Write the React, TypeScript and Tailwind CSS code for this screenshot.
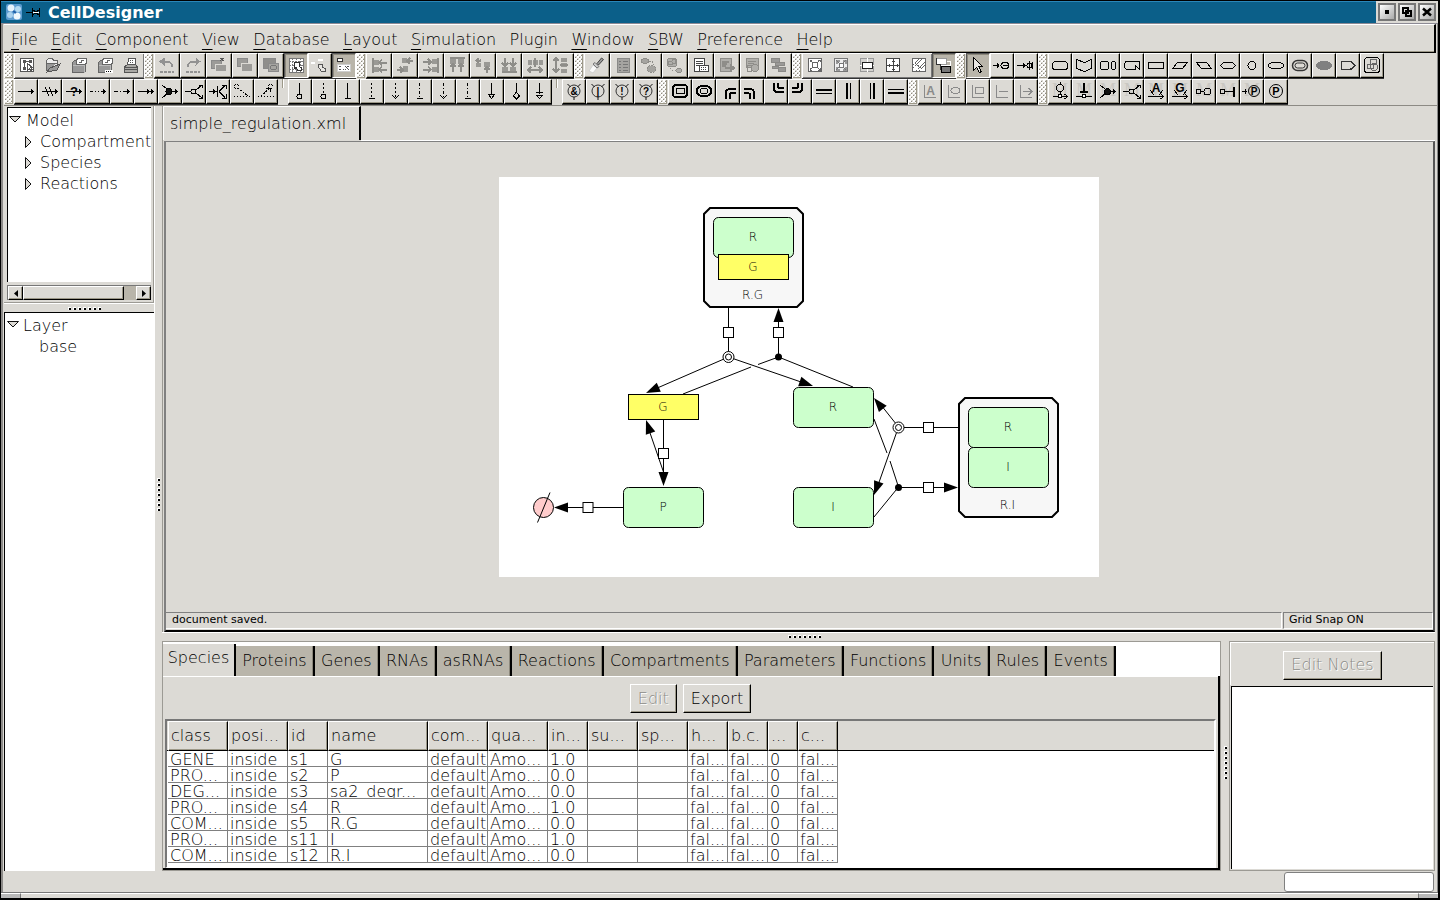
import type { ReactNode } from "react";

const base = "M4 12.5H20M17.5 10v5M18.5 11v3";

function T({ x, y, size = 11, children }: { x: number; y: number; size?: number; children: ReactNode }) {
  return (
    <text x={x} y={y} fontSize={size} fontWeight={700} textAnchor="middle" fill="currentColor" stroke="none" fontFamily="Liberation Sans, sans-serif">
      {children}
    </text>
  );
}

const Watermark = () => (
  <text x={12} y={17} fontSize={18} textAnchor="middle" fill="#c9c7c2" stroke="none" fontFamily="Liberation Serif, serif">
    M
  </text>
);

const Gate = ({ sign }: { sign: string }) => (
  <g shapeRendering="auto" stroke="#333">
    <circle cx="12" cy="12" r="6" />
    <path d="M5.5 5l3 3M18.500 5l-3 3M12 18v3" stroke="#111" />
    <T x={12} y={16} size={10}>{sign}</T>
  </g>
);

const Folder = ({ dots }: { dots?: boolean }) => (
  <g stroke="#666">
    <path d="M5.500 9.500l2-2h3v4h8v7l-2 1h-11z" fill="#999" />
    <path d="M9.500 6.500l2-1h8v5l-2 1h-8z" fill="#fff" />
    <path d="M12 9.500h2v-2h3" />
    <path d="M6 12.500h11v7" stroke="#bbb" />
    {dots && (
      <g>
        <path d="M12 18h8" stroke="#fff" strokeWidth="3" />
        <path d="M13 18.500h6" stroke="#000" strokeDasharray="1 1" />
      </g>
    )}
  </g>
);

const Bars = ({ d, r }: { d: string; r: number[][] }) => (
  <g stroke="#8e8d89">
    {r.map(([x, y, w, h], i) => (
      <rect key={i} x={x} y={y} width={w} height={h} fill="#9a9995" stroke="none" />
    ))}
    <path d={d} strokeWidth="2" />
  </g>
);

const icons: Record<string, ReactNode> = {
  New: <g stroke="#555"><rect x="5.5" y="5.5" width="13" height="13" fill="#fff" /><rect x="8" y="7" width="3" height="3" fill="#555" stroke="none" /><rect x="14" y="7" width="3" height="3" fill="#555" stroke="none" /><rect x="8" y="14" width="3" height="3" fill="#555" stroke="none" /><path d="M11 8.500h3M9.500 10v4" /><path d="M12.500 10.500v7l2-2 1 2 2-1-2-2h2z" fill="#fff" /></g>,
  Open: <g stroke="#666"><path d="M5.500 17V7.500l2-2h4l1 2h4v5" fill="#eee" /><path d="M5.500 17.500V10.500h10" fill="#999" /><path d="M6 19l3-4 10-4-3 6z" fill="#999" stroke="#555" /></g>,
  Close: <Folder />,
  "Close All": <Folder dots />,
  Print: <g stroke="#555"><path d="M8.500 12l1-6.500h7v6.500" fill="#fff" /><path d="M11 7.500h4M11 9.500h4" strokeDasharray="1 1" /><path d="M5.500 14l3-2.500h8l2 2.500v5h-13z" fill="#aaa9a5" /><path d="M5 14.500h14M5 16.500h14" /></g>,
  Undo: <g stroke="#929292"><path d="M8 8.5h6l3 3v2" strokeWidth="2" /><path d="M5 8.5l4-3v6z" fill="#929292" /><path d="M5 18.5h14" strokeWidth="2" strokeDasharray="3 1" /></g>,
  Redo: <g stroke="#929292"><path d="M16 8.5h-6l-3 3v2" strokeWidth="2" /><path d="M19 8.5l-4-3v6z" fill="#929292" /><path d="M5 18.5h14" strokeWidth="2" strokeDasharray="3 1" /></g>,
  Cut: <g stroke="#8a8a8a" fill="#9c9b98"><rect x="4.5" y="7.5" width="10" height="8" rx="1" /><rect x="8.500" y="11.500" width="11" height="7" rx="1" stroke="#dcdad5" /><path d="M13 5l4 3M17 5l-4 3" stroke="#555" /></g>,
  Copy: <g stroke="#8a8a8a" fill="#9c9b98"><rect x="4.5" y="5.5" width="10" height="8" rx="1" /><rect x="8.5" y="10.5" width="11" height="8" rx="1" stroke="#dcdad5" /></g>,
  Paste: <g stroke="#8a8a8a"><rect x="4.5" y="5.5" width="12" height="10" rx="1" fill="#8f8e8b" /><rect x="9.5" y="10.500" width="10" height="8" rx="1" fill="#a5a4a0" /><rect x="11.5" y="12.5" width="6" height="4" rx="2" stroke="#777" /></g>,
  Grid: <g stroke="#777"><path d="M5 5h14v14H5z" fill="#fff" /><path d="M5 8.500h14M5 12.5h14M5 16.5h14M8.5 5v14M12.5 5v14M16.5 5v14" strokeDasharray="2 1" /><path d="M10 10.500v-1h5v4l2 1v3h-3l-2-3-1 1z" fill="#fff" stroke="#333" /></g>,
  Snap: <g><path d="M3 10h4M10 7h5" stroke="#fff" strokeWidth="2" /><path d="M10.500 11.500h4v3l3 1v3h-4l-2-3-1-1z" fill="#e8e6e2" stroke="#555" /></g>,
  Overview: <g><rect x="5.500" y="5.500" width="5" height="3" fill="#fff" stroke="#333" /><rect x="5.500" y="11.500" width="13" height="7" fill="#fff" stroke="#ccc" /><path d="M7 13.500h2M7 16.500h2M11 16.500h1M13 13l3 3M15 13.500h2M16 16.500h1M13 16.500h1" stroke="#555" /></g>,
  "Align Left": <Bars d="M6 5v15M12 9.500h8M15 6.500l-3 3 3 3M12 16.500h8M15 13.500l-3 3 3 3" r={[[6, 7, 6, 5], [6, 14, 6, 5]]} />,
  "Align Centre": <Bars d="M14 8h6M17 5l-3 3 3 3M4 17h6M7 14l3 3-3 3" r={[[9, 5, 5, 5], [10, 13, 5, 6]]} />,
  "Align Right": <Bars d="M19 5v15M4 8.500h8M9 6l3 3-3 3M4 16.500h8M9 13.500l3 3-3 3" r={[[13, 6, 6, 5], [13, 14, 6, 5]]} />,
  "Align Top": <Bars d="M5 5h15M8 19v-8M5 14l3-3 3 3M16 19v-8M13 14l3-3 3 3" r={[[5, 6, 6, 5], [13, 6, 6, 5]]} />,
  "Align Middle": <Bars d="M7 5v4M5 7l2 2 3-2M16 20v-5M13 17l3-3 3 3" r={[[5, 10, 5, 4], [13, 9, 6, 5]]} />,
  "Align Bottom": <Bars d="M5 19h15M8 5v8M5 10l3 3 3-3M16 5v8M13 10l3 3 3-3" r={[[5, 14, 6, 5], [13, 14, 6, 5]]} />,
  "Space Horizontally": <Bars d="M5 17h14M8 14l-3 3 3 3M16 14l3 3-3 3M12 5v9" r={[[5, 7, 4, 5], [10, 7, 5, 5], [16, 7, 4, 5]]} />,
  "Space Vertically": <Bars d="M7 5v14M4 8l3-3 3 3M4 16l3 3 3-3M11 12h8" r={[[12, 5, 6, 4], [12, 10, 6, 4], [12, 16, 6, 4]]} />,
  Brush: <g shapeRendering="auto"><path d="M4 18l4-6 4 3-4 5z" fill="#fafafa" stroke="#d0d0d0" /><path d="M8 11l4 4 2-1.500-4-4z" fill="#ccc" stroke="#777" /><path d="M12 10.500L16.500 5l2 1.500-5 5.500z" fill="#999" stroke="#444" /></g>,
  List: <g stroke="#777"><rect x="6.500" y="5.500" width="12" height="14" fill="#a5a4a1" stroke="#8a8a88" /><path d="M8 8.500h2M12 8.500h5M8 11.500h2M12 11.500h5M8 14.500h2M12 14.500h5M8 17.500h2M12 17.500h5" /></g>,
  Group: <g stroke="#8e8d89" fill="#a5a4a0"><ellipse cx="8" cy="8" rx="3.500" ry="2.500" /><path d="M12 8.500h3l2 3" fill="none" strokeDasharray="2 1" /><ellipse cx="14.500" cy="16" rx="4.500" ry="3.500" strokeDasharray="2 1" /></g>,
  Ungroup: <g stroke="#8e8d89" fill="#b0afab"><rect x="4.500" y="5.500" width="9" height="8" rx="2" /><circle cx="7.500" cy="10" r="2" /><circle cx="11" cy="8.500" r="2" /><path d="M7 15l3 3" strokeDasharray="2 1" /><ellipse cx="16" cy="17.500" rx="3" ry="2" /></g>,
  Notes: <g stroke="#444"><path d="M5.500 5.500h10v13h-10z" fill="#fff" /><path d="M7 8.500h7M7 10.500h7M7 12.500h3" /><path d="M10.500 12.500h9v6h-9z" fill="#fff" /><path d="M12 14.500h6M12 16.500h6" strokeDasharray="1 1" /></g>,
  "Notes Out": <g stroke="#8e8d89"><path d="M5 5h11v13H5z" fill="#b0afab" /><path d="M7 8.500h7M7 10.500h5M7 12.500h4M10 15h8M15 12l4 3-4 3" strokeWidth="2" /></g>,
  "Notes Pin": <g stroke="#8e8d89"><path d="M5 5h12v9H5z" fill="#b0afab" /><path d="M7 8.500h8M7 10.500h6" /><rect x="6.500" y="12.500" width="4" height="6" /><circle cx="14" cy="15" r="3.500" fill="#b0afab" /></g>,
  Layers: <g stroke="#8a8986" fill="#9a9997"><rect x="4.500" y="5.500" width="8" height="4" /><rect x="8.500" y="9.500" width="9" height="3" /><rect x="5.500" y="13.500" width="6" height="2" /><rect x="11.500" y="14.500" width="7" height="4" /></g>,
  "Fit Window": <g stroke="#666"><rect x="5.500" y="5.500" width="13" height="13" fill="#fff" /><rect x="9.500" y="9.500" width="5" height="5" /><path d="M7 7l3 3M17 7l-3 3M7 17l3-3M17 17l-3-3M7 9v-2h2M15 7h2v2M7 15v2h2M15 17h2v-2" /></g>,
  "Zoom Corners": <g stroke="#777"><rect x="5.500" y="5.500" width="13" height="13" fill="#eee" /><path d="M8 11V8h3M14 8h3v3M8 14v3h3M17 14v3h-3" strokeWidth="2" stroke="#999" /><rect x="10.500" y="10.500" width="4" height="4" fill="#fff" /><path d="M7 7l3 3M17 7l-3 3M7 17l3-3M17 17l-3-3" /></g>,
  "Zoom Reset": <g stroke="#999"><rect x="5.500" y="5.500" width="13" height="13" fill="#d4d3d0" /><path d="M12.500 5v14M5 12.500h14" stroke="#fff" /><rect x="7.500" y="9.500" width="10" height="6" fill="#fff" stroke="#222" /></g>,
  "Zoom Cross": <g stroke="#444"><rect x="5.500" y="5.500" width="13" height="13" fill="#fff" /><path d="M12.500 6v12M6 12.500h12M11 8.500h3M11 16.500h3M8.500 11v3M16.500 11v3" /></g>,
  "Zoom Area": <g stroke="#666"><rect x="5.500" y="5.500" width="13" height="13" fill="#fff" /><path d="M6 15l9-9M9 18l9-9M8 10l7 6M6 12l6-6M12 18l6-6" strokeDasharray="2 1" /></g>,
  Birdview: <g><rect x="4" y="5" width="10" height="6" fill="#fff" stroke="#999" /><path d="M4.500 5v6h4v5h3" stroke="#333" /><rect x="9" y="13" width="9" height="6" fill="#777" /><path d="M15 8.500h3v4M9 12.500h9" stroke="#fff" /></g>,
  Select: <path d="M7.500 4.500v13l3-3 3 5 2-1-3-5h4z" fill="#e8e6e2" />,
  "Add Complex": <path d="M3 12.500h6M7.500 10v5M8.500 11v3M11 12.500a4 3 0 0 1 8 0a4 3 0 0 1-8 0M13 12.500h6" />,
  "Add Phospho": <path d="M3 12.500h9M9.500 10v5M10.500 11v3M15.500 8v9M13 12.500a2.500 2.500 0 0 1 5 0a2.500 2.500 0 0 1-5 0M18.500 9v7" />,

  Protein: <rect x="4.500" y="8.500" width="15" height="8" rx="3" />,
  Receptor: <path d="M4.500 6.500l8 3 7-3v9l-7 3-8-3z" />,
  Channel: <g><rect x="4.500" y="8.500" width="8" height="8" rx="2" /><rect x="15.500" y="8.500" width="4" height="8" rx="2" /></g>,
  Truncated: <path d="M19.500 8.500H7a3 3 0 0 0-2.500 3v2a3 3 0 0 0 2.500 3h8v-4l4.500 4z" />,
  Gene: <rect x="4.500" y="9.500" width="15" height="6" />,
  RNA: <path d="M9.500 9.500h10l-5 6h-10z" />,
  "Antisense RNA": <path d="M4.500 9.500h10l5 6h-10z" />,
  Phenotype: <path d="M7.500 9.500h9l3 3-3 3h-9l-3-3z" />,
  Ion: <circle cx="12" cy="12.500" r="4" />,
  "Simple Molecule": <ellipse cx="12" cy="12.500" rx="7.500" ry="3.500" />,
  Drug: <g stroke="#333" shapeRendering="auto"><rect x="4.500" y="7.500" width="15" height="10" rx="5" strokeWidth="1.500" /><rect x="7" y="10" width="10" height="5" rx="2.500" /></g>,
  Unknown: <ellipse cx="12" cy="12.500" rx="7.500" ry="4" fill="#808080" stroke="#808080" />,
  Tag: <path d="M5.500 8.500h9l4.500 4-4.500 4h-9z" stroke="#333" strokeWidth="1.500" />,
  Complex: <g><rect x="4.500" y="4.500" width="15" height="15" rx="3" /><g stroke="#666"><rect x="10.500" y="6.500" width="6" height="5" /><rect x="7.500" y="11.500" width="6" height="4" rx="1" /><circle cx="14" cy="14" r="3.500" /></g></g>,

  "State Transition": <path d={base} />,
  "Known Omitted": <path d={base + "M7 8l4 9M11 8l4 9"} />,
  "Unknown Transition": <g><path d="M4 12.5h16M17.5 10v5M18.500 11v3" /><T x={12} y={17} size={13}>?</T></g>,
  Transcription: <path d="M4 12.5h3M9 12.5h1M12 12.500h1M15 12.5h5M17.5 10v5M18.500 11v3" />,
  Translation: <path d="M4 12.5h4M10 12.5h1M13 12.5h7M17.5 10v5M18.500 11v3" />,
  Transport: <path d="M4 12.5h16M13.500 10v5M14.500 11v3M18.500 11v3M17.500 10v5" />,
  Association: <g><path d="M4 6l8 6.500L4 19M12 12.500h8M17.500 10v5M18.500 11v3" /><circle cx="11" cy="12.500" r="3" fill="#111" /></g>,
  Dissociation: <g><path d="M3 12.500h6M14 11l6-5M14 14l6 5M16.500 6H20v3M16.500 19H20v-3" /><circle cx="11.500" cy="12.500" r="2.500" /></g>,
  Truncation: <path d="M3 12.500h8M7.500 10v5M8.500 11v3M11.500 7v11M13 12.500l6-6M13 12.500l6 6M16 6h4v4M16 19h4v-4" />,
  "Drag Left": <g><circle cx="6.500" cy="7.500" r="2.500" strokeDasharray="1 1" /><path d="M8 9l10 8" strokeDasharray="2 1" /><path d="M4 17.500h16" strokeDasharray="1 2" /></g>,
  "Drag Right": <g><circle cx="16.500" cy="7.500" r="2.500" strokeDasharray="1 1" /><path d="M7 17l9-8" strokeDasharray="2 1" /><path d="M12 9h4v4" /><path d="M4 17.500h16" strokeDasharray="1 2" /></g>,

  Catalysis: <g><path d="M11.500 4v11" /><circle cx="11.500" cy="17.500" r="2.500" /></g>,
  "Unknown Catalysis": <g><path d="M11.500 4v11" strokeDasharray="2 2" /><circle cx="11.500" cy="17.500" r="2.500" /></g>,
  Inhibition: <path d="M11.500 4v15M9 19.500h6" />,
  "Unknown Inhibition": <g><path d="M11.500 4v15" strokeDasharray="2 2" /><path d="M9 19.500h6" /></g>,
  Positive: <g><path d="M11.500 4v15" strokeDasharray="2 2" /><path d="M8 16l3.500 3.500L15 16" /></g>,
  Negative: <g><path d="M11.500 4v15" strokeDasharray="3 2 1 2" /><path d="M9 19.500h6" /></g>,
  "Reduced Stimulation": <g><path d="M11.500 4v15" strokeDasharray="3 2 1 2" /><path d="M8 16l3.500 3.500L15 16" /></g>,
  "Reduced Modulation": <g><path d="M11.500 4v15" strokeDasharray="3 2 1 2" /><path d="M9 19.500h6" /></g>,
  "Physical Stimulation": <path d="M11.500 4v12M8.500 15.500h6l-3 4z" />,
  Modulation: <path d="M12.500 4v9M12.500 13l3 4-3 3-3-3z" />,
  Trigger: <path d="M11.500 4v11M8 13.500h7M8.500 16.500h6l-3 3z" />,

  And: <Gate sign="&" />,
  Or: <Gate sign="|" />,
  Not: <Gate sign="!" />,
  "Unknown Gate": <Gate sign="?" />,

  "Square Compartment": <g strokeWidth="2"><rect x="5" y="6" width="14" height="12" rx="3" /><rect x="8.500" y="9.500" width="8" height="5" rx="1" strokeWidth="1" /></g>,
  "Oval Compartment": <g strokeWidth="2"><ellipse cx="12" cy="12" rx="7.500" ry="5.500" /><ellipse cx="12" cy="12" rx="4" ry="2.500" strokeWidth="1" /></g>,
  "Corner NW": <path d="M10 20v-6q0-4 4-4h6M13.500 20v-4q0-2 2-2h4.500" strokeWidth="2" />,
  "Corner NE": <path d="M4 10h6q4 0 4 4v6M4 14h3q3 0 3 2v4" strokeWidth="2" />,
  "Corner SW": <path d="M10 4v5q0 4 4 4h6M14 4v3q0 2 2 2h4" strokeWidth="2" />,
  "Corner SE": <path d="M14 4v5q0 4-4 4H4M10 4v3q0 2-2 2H4" strokeWidth="2" />,
  "Side North": <g><path d="M4 11h16" strokeWidth="2" /><path d="M4 14.500h16" /></g>,
  "Side West": <g><path d="M11 4v16" strokeWidth="2" /><path d="M14.500 4v16" /></g>,
  "Side East": <g><path d="M10.500 4v16" /><path d="M14 4v16" strokeWidth="2" /></g>,
  "Side South": <g><path d="M4 10.500h16" /><path d="M4 14h16" strokeWidth="2" /></g>,

  "Layer Text": <g stroke="#8a8a8a" color="#8a8a8a"><path d="M6.500 6v12.500H18" /><T x={12.500} y={16} size={12}>A</T></g>,
  "Layer Oval": <g stroke="#8a8a8a"><path d="M6.500 6v12.500H18" /><ellipse cx="13.500" cy="11.500" rx="4.500" ry="3" /></g>,
  "Layer Rectangle": <g stroke="#8a8a8a"><path d="M6.500 6v12.500H18" /><rect x="9.500" y="8.500" width="8" height="6" /></g>,
  "Layer Line": <path stroke="#8a8a8a" d="M6.500 6v12.500H18M9 12.500h9" />,
  "Layer Arrow": <path stroke="#8a8a8a" d="M6.500 6v12.500H18M9 12.500h9M14.500 9l3.500 3.500-3.500 3.500" />,

  "Reaction Catalysis": <g><Watermark /><circle cx="12" cy="9" r="3.500" /><path d="M12.500 3v2M12.500 13v3M5 17.500h14M16.500 15l3 2.500-3 2.500" /><rect x="10.500" y="15.500" width="3" height="3" fill="#fff" /></g>,
  "Reaction Inhibition": <g><Watermark /><path d="M12 4v9M8 13h8" strokeWidth="2" /><path d="M4 17.500h16" /><rect x="10.500" y="15.500" width="3" height="3" fill="#fff" /></g>,
  "Join Mark": <g><Watermark /><path d="M4 6l8 6.500L4 19M12 12.500h8M17.500 10v5M18.500 11v3" /><circle cx="11.500" cy="12.500" r="3" fill="#111" /></g>,
  "Split Mark": <g><Watermark /><path d="M3 12.500h6M14 11l6-5M14 14l6 5M17 6h3v3M17 19h3v-3" /><circle cx="11.500" cy="12.500" r="2.500" /></g>,
  Activate: <g><Watermark /><T x={12} y={13} size={12}>A</T><path d="M4 17.500h15M16.500 14.500l3 3-3 2.500M6 11l4 5M19 11l-4 5" /></g>,
  "Gene Activate": <g><Watermark /><T x={12} y={13} size={12}>G</T><path d="M4 17.500h15M16.500 14.500l3 3-3 2.500M6 11l4 5M19 11l-4 5" /></g>,
  "Site Circle": <g><Watermark /><rect x="4.500" y="10.500" width="4" height="4" /><path d="M9 12.500h3" /><circle cx="15.500" cy="12.500" r="3.500" /></g>,
  "Site Bar": <g><Watermark /><rect x="4.500" y="10.500" width="4" height="4" /><path d="M9 12.500h8" /><path d="M18 8v10" strokeWidth="2" /></g>,
  Phosphorylate: <g shapeRendering="auto"><Watermark /><path d="M2 12.500h5M5.500 10v5" /><circle cx="14" cy="12" r="5.500" /><T x={14} y={16} size={10}>P</T></g>,
  Phosphate: <g shapeRendering="auto"><circle cx="12" cy="12" r="6.500" /><T x={12} y={16} size={11}>P</T></g>,
};

const bevel = "border border-t-white border-l-white border-r-black border-b-black shadow-[inset_-1px_-1px_0_#9c9888]";
const pressed = "border border-t-[#555] border-l-[#555] border-r-white border-b-white bg-[#b9b5aa] shadow-[inset_1px_1px_0_#8c887c]";

function Tool({ name, wide, flat, down }: { name: string; wide?: boolean; flat?: boolean; down?: boolean }) {
  return (
    <button
      type="button"
      aria-label={name}
      className={`flex h-[25px] shrink-0 items-start justify-center ${wide ? "w-[26px]" : "w-6"} ${down ? pressed : flat ? "border border-transparent" : bevel}`}
    >
      <svg width="24" height="24" viewBox="0 0 24 24" className="-mt-px -ml-px shrink-0" fill="none" stroke="currentColor" shapeRendering="crispEdges" aria-hidden="true">
        {icons[name]}
      </svg>
    </button>
  );
}

function Handle() {
  return (
    <div className="flex h-[25px] w-[10px] shrink-0 border-t border-l border-white">
      <svg width="8" height="24" aria-hidden="true" shapeRendering="crispEdges" className="border-r border-b border-[#9c9888]">
        <defs>
          <pattern id="grip" width="4" height="4" patternUnits="userSpaceOnUse">
            <rect width="4" height="4" fill="#dcdad5" />
            <rect x="0" y="0" width="2" height="2" fill="#fff" />
            <rect x="2" y="2" width="2" height="2" fill="#fff" />
            <rect x="2" y="1" width="1" height="1" fill="#8f8b80" />
            <rect x="0" y="3" width="1" height="1" fill="#8f8b80" />
          </pattern>
        </defs>
        <rect width="7" height="24" fill="url(#grip)" />
      </svg>
    </div>
  );
}

const Gap = () => (
  <div className="flex h-[25px] w-[10px] shrink-0 justify-center">
    <div className="h-[9px] w-0.5 border-l border-[#9c9888] bg-white" />
  </div>
);

function Tools({ names, wide, flat, down = [] }: { names: string[]; wide?: boolean; flat?: boolean; down?: string[] }) {
  return (
    <div className={`flex h-[26px] shrink-0 border-b border-[#333] ${flat ? "shadow-[inset_1px_1px_0_#fff,inset_-1px_-1px_0_#777]" : ""}`}>
      {names.map((n) => (
        <Tool key={n} name={n} wide={wide} flat={flat} down={down.includes(n)} />
      ))}
    </div>
  );
}

const menus: [string, boolean][] = [
  ["File", true], ["Edit", true], ["Component", true], ["View", true], ["Database", true], ["Layout", true],
  ["Simulation", true], ["Plugin", false], ["Window", true], ["SBW", true], ["Preference", true], ["Help", true],
];

function Dots({ vertical }: { vertical?: boolean }) {
  return (
    <div className={`flex gap-[2px] ${vertical ? "flex-col" : ""}`}>
      {[0, 1, 2, 3, 4, 5, 6].map((i) => (
        <span key={i} className="size-[3px] border-t border-l border-white bg-black" />
      ))}
    </div>
  );
}

function Expander({ open }: { open?: boolean }) {
  return (
    <svg width="12" height="12" viewBox="0 0 12 12" fill="#dcdad5" stroke="#111" className="shrink-0" aria-hidden="true">
      <path d={open ? "M.5 1.500h11l-5.500 5.500z" : "M3.500 .5v11l5.500-5.500z"} />
    </svg>
  );
}

/* ---------- network diagram ---------- */

function Node({ x, y, w = 80, h = 40, kind = "protein", label }: { x: number; y: number; w?: number; h?: number; kind?: "protein" | "gene"; label: string }) {
  return (
    <g>
      <rect x={x + 0.5} y={y + 0.5} width={w} height={h} rx={kind === "gene" ? 0 : 5} fill={kind === "gene" ? "#ffff66" : "#ccffcc"} stroke="#000" />
      <text x={x + w / 2} y={y + h / 2 + 4} fontSize="12" textAnchor="middle">{label}</text>
    </g>
  );
}

function ComplexBox({ x, y, w, h, label }: { x: number; y: number; w: number; h: number; label: string }) {
  const r = x + w;
  const b = y + h;
  return (
    <g>
      <path d={`M${x + 6} ${y}H${r - 6}L${r} ${y + 6}V${b - 6}L${r - 6} ${b}H${x + 6}L${x} ${b - 6}V${y + 6}Z`} fill="#f7f7f7" stroke="#000" strokeWidth="2" />
      <text x={x + w / 2 - 1} y={b - 8} fontSize="12" textAnchor="middle">{label}</text>
    </g>
  );
}

const Head = ({ x, y, a }: { x: number; y: number; a: number }) => (
  <path d="M0 0L-14 -5V5Z" fill="#000" transform={`translate(${x} ${y}) rotate(${a})`} />
);

const Square = ({ x, y }: { x: number; y: number }) => <rect x={x - 5} y={y - 5} width="10" height="10" fill="#fff" stroke="#000" />;

const Ring = ({ x, y }: { x: number; y: number }) => (
  <g fill="#fff" stroke="#000">
    <circle cx={x} cy={y} r="5.500" />
    <circle cx={x} cy={y} r="3" />
  </g>
);

function Diagram() {
  return (
    <svg width="600" height="400" viewBox="499 177 600 400" className="shrink-0 bg-white" role="img" aria-label="Regulation network" fontFamily="DejaVu Sans, sans-serif">
      <g stroke="#000" fill="none">
        <path d="M728.500 308V357M778.500 318V357M728.500 357L655 389M728.500 357L804 383M778.500 357L758 364.500M751 367L683 394M778.500 357L853 387" />
        <path d="M663.500 420V478M663.500 472L649 430M623 507.500H564M958 427.500H899M899 487.500H948" />
        <path d="M898.500 427L881 405M898.500 427L877 488M874 419L887 453M890 461L898.500 487L874 517" />
      </g>
      <Head x={778.5} y={308} a={-90} />
      <Head x={646} y={393} a={156} />
      <Head x={813} y={386} a={19} />
      <Head x={646} y={420} a={-109} />
      <Head x={663.5} y={486} a={90} />
      <Head x={554} y={507.5} a={180} />
      <Head x={874} y={398} a={-129} />
      <Head x={874} y={495} a={110} />
      <Head x={958} y={487.5} a={0} />
      <Square x={728.5} y={332.5} />
      <Square x={778.5} y={332.5} />
      <Square x={663.5} y={453.5} />
      <Square x={588} y={507.5} />
      <Square x={928.5} y={427.5} />
      <Square x={928.5} y={487.5} />
      <Ring x={728.5} y={357} />
      <Ring x={898.5} y={427.5} />
      <circle cx="778.500" cy="357" r="3.500" />
      <circle cx="898.500" cy="487.500" r="3.500" />
      <circle cx="543.500" cy="507.500" r="10" fill="#ffcccc" stroke="#000" />
      <path d="M537.500 522.500L550 492.500" stroke="#000" />
      <ComplexBox x={704} y={208} w={99} h={99} label="R.G" />
      <Node x={713} y={217} label="R" />
      <Node x={718} y={254} w={70} h={25} kind="gene" label="G" />
      <Node x={628} y={394} w={70} h={25} kind="gene" label="G" />
      <Node x={793} y={387} label="R" />
      <Node x={623} y={487} label="P" />
      <Node x={793} y={487} label="I" />
      <ComplexBox x={959} y={398} w={99} h={119} label="R.I" />
      <Node x={968} y={407} label="R" />
      <Node x={968} y={447} label="I" />
    </svg>
  );
}

/* ---------- species table ---------- */

const columns: [string, string][] = [
  ["class", "w-[60px]"], ["posi...", "w-[60px]"], ["id", "w-[40px]"], ["name", "w-[100px]"], ["com...", "w-[60px]"],
  ["qua...", "w-[60px]"], ["in...", "w-[40px]"], ["su...", "w-[50px]"], ["sp...", "w-[50px]"], ["h...", "w-[40px]"],
  ["b.c.", "w-[40px]"], ["...", "w-[30px]"], ["c...", "w-[40px]"],
];

const species = [
  ["GENE", "s1", "G", "1.0"],
  ["PRO...", "s2", "P", "0.0"],
  ["DEG...", "s3", "sa2_degr...", "0.0"],
  ["PRO...", "s4", "R", "1.0"],
  ["COM...", "s5", "R.G", "0.0"],
  ["PRO...", "s11", "I", "1.0"],
  ["COM...", "s12", "R.I", "0.0"],
].map(([cls, id, name, init]) => [cls, "inside", id, name, "default", "Amo...", init, "", "", "fal...", "fal...", "0", "fal..."]);

function SpeciesTable() {
  return (
    <table className="w-[670px] table-fixed border-separate border-spacing-0 text-left">
      <thead>
        <tr>
          {columns.map(([label, width]) => (
            <th key={label} className={`h-[30px] overflow-hidden p-0 pl-0.5 leading-5 font-extralight whitespace-nowrap ${width} ${bevel}`}>
              {label}
            </th>
          ))}
        </tr>
      </thead>
      <tbody className="bg-white">
        {species.map((row) => (
          <tr key={row[2]}>
            {row.map((cell, i) => (
              <td key={i} className="h-4 overflow-hidden border-r border-b border-[#808080] p-0 pl-0.5 whitespace-nowrap">
                <div className="h-[15px] overflow-hidden leading-[17px]">{cell}</div>
              </td>
            ))}
          </tr>
        ))}
      </tbody>
    </table>
  );
}

const tabs = ["Proteins", "Genes", "RNAs", "asRNAs", "Reactions", "Compartments", "Parameters", "Functions", "Units", "Rules", "Events"];

const winButton = "flex size-[18px] items-center justify-center border-2 border-[#777] bg-linear-to-br from-white to-[#aaa]";

export default function App() {
  return (
    <div className="flex h-screen min-h-[700px] flex-col overflow-hidden border-r-2 border-b-2 border-l border-black bg-[#dcdad5] font-['DejaVu_Sans',sans-serif] text-base font-extralight text-black">
      <header className="flex h-6 shrink-0 items-center border-t border-b border-t-black border-b-[#8c8a94] bg-[#0b5f89] pl-[5px] shadow-[inset_0_1px_0_#2a86b8]">
        <svg width="16" height="16" viewBox="0 0 16 16" aria-hidden="true">
          <rect width="16" height="16" rx="2" fill="#5a9bd0" />
          <circle cx="5" cy="4" r="3.500" fill="#e6f3fb" />
          <circle cx="12" cy="5" r="3" fill="#b5dbf2" />
          <circle cx="4" cy="11" r="3" fill="#a9d2ee" />
          <circle cx="11" cy="12" r="3.500" fill="#eef8fd" />
          <path d="M7 7l3 2" stroke="#1d5fa8" strokeWidth="2" />
        </svg>
        <svg width="14" height="12" viewBox="0 0 14 12" className="ml-1" fill="none" stroke="#000" shapeRendering="crispEdges" aria-hidden="true">
          <path d="M0 6.500h6" />
          <path d="M6.500 2v9M13.500 2v9M7 4l2 1.500h2L13 4M7 9l2-1.500h2L13 9" />
          <path d="M7 6.500h6" stroke="#fff" />
        </svg>
        <h1 className="ml-2 pt-0.5 text-base leading-5 font-bold text-white">CellDesigner</h1>
        <div className="ml-auto flex h-[22px] items-center gap-0.5 bg-[#dcdad5] px-0.5">
          <button type="button" aria-label="Minimize" className={winButton}>
            <span className="size-1 bg-black" />
          </button>
          <button type="button" aria-label="Maximize" className={winButton}>
            <svg width="12" height="12" viewBox="0 0 12 12" fill="none" stroke="#000" strokeWidth="2" shapeRendering="crispEdges"><path d="M2 2h5v5H2zM5 5h5v5H5z" /></svg>
          </button>
          <button type="button" aria-label="Close" className={winButton}>
            <svg width="10" height="10" viewBox="0 0 10 10" stroke="#000" strokeWidth="2.500"><path d="M1 1.500l8 7M9 1.500l-8 7" /></svg>
          </button>
        </div>
      </header>

      <div className="flex min-h-0 grow flex-col border-r border-l-2 border-r-[#888] border-l-[#8c8a88] pl-px">
        <nav className="mr-px flex h-[29px] shrink-0 items-center border-t border-r-2 border-b border-t-white border-r-black border-b-black pt-0.5 pl-[7px] shadow-[inset_0_-1px_0_#9c9888]">
          <div className="flex w-[822px] justify-between">
            {menus.map(([label, key]) => (
              <button key={label} type="button" className="leading-5">
                <span className={key ? "underline decoration-1 underline-offset-4" : ""}>{label[0]}</span>
                {label.slice(1)}
              </button>
            ))}
          </div>
        </nav>

        <div className="flex h-[26px] shrink-0">
          <Handle />
          <Tools wide flat names={["New", "Open", "Close", "Close All", "Print"]} />
          <Handle />
          <Tools wide names={["Undo", "Redo", "Cut", "Copy", "Paste"]} />
          <Tools names={["Grid", "Snap", "Overview"]} down={["Grid", "Overview"]} />
          <Handle />
          <Tools wide names={["Align Left", "Align Centre", "Align Right", "Align Top", "Align Middle", "Align Bottom", "Space Horizontally", "Space Vertically"]} />
          <Handle />
          <Tools wide names={["Brush", "List", "Group", "Ungroup", "Notes", "Notes Out", "Notes Pin", "Layers"]} />
          <Handle />
          <Tools wide flat names={["Fit Window", "Zoom Corners", "Zoom Reset", "Zoom Cross", "Zoom Area"]} />
          <Tools names={["Birdview"]} down={["Birdview"]} />
          <Handle />
          <Tools names={["Select", "Add Complex", "Add Phospho"]} down={["Select"]} />
          <Handle />
          <Tools names={["Protein", "Receptor", "Channel", "Truncated", "Gene", "RNA", "Antisense RNA", "Phenotype", "Ion", "Simple Molecule", "Drug", "Unknown", "Tag", "Complex"]} />
        </div>
        <div className="flex h-[26px] shrink-0">
          <Handle />
          <Tools names={["State Transition", "Known Omitted", "Unknown Transition", "Transcription", "Translation", "Transport", "Association", "Dissociation", "Truncation", "Drag Left", "Drag Right"]} />
          <Gap />
          <Tools names={["Catalysis", "Unknown Catalysis", "Inhibition", "Unknown Inhibition", "Positive", "Negative", "Reduced Stimulation", "Reduced Modulation", "Physical Stimulation", "Modulation", "Trigger"]} />
          <Gap />
          <Tools names={["And", "Or", "Not", "Unknown Gate"]} />
          <Handle />
          <Tools names={["Square Compartment", "Oval Compartment", "Corner NW", "Corner NE", "Corner SW", "Corner SE", "Side North", "Side West", "Side East", "Side South"]} />
          <Handle />
          <Tools names={["Layer Text", "Layer Oval", "Layer Rectangle", "Layer Line", "Layer Arrow"]} />
          <Handle />
          <Tools names={["Reaction Catalysis", "Reaction Inhibition", "Join Mark", "Split Mark", "Activate", "Gene Activate", "Site Circle", "Site Bar", "Phosphorylate", "Phosphate"]} />
        </div>

        <div className="flex min-h-0 grow border-t border-[#8c8a84] pr-0.5">
          <aside className="flex w-[150px] shrink-0 flex-col">
            <div className="flex h-[197px] shrink-0 flex-col border-r border-b border-[#9c9a94] pt-px pr-0.5 pb-0.5 pl-[3px]">
              <ul className="grow overflow-hidden border-t border-l border-black bg-white pt-0.5 pl-px leading-[21px] whitespace-nowrap">
                <li className="flex items-center gap-[5px]"><Expander open />Model</li>
                {["Compartments", "Species", "Reactions"].map((n) => (
                  <li key={n} className="flex items-center gap-[6px] pl-[13px]"><Expander />{n}</li>
                ))}
              </ul>
              <div className="mt-[3px] flex h-[15px] shrink-0 border-t border-l border-[#777] bg-[#b9b5aa]">
                <button type="button" aria-label="Scroll left" className={`flex w-[15px] items-center justify-center bg-[#dcdad5] ${bevel}`}>
                  <svg width="4" height="7" viewBox="0 0 4 7"><path d="M4 0v7L0 3.500z" /></svg>
                </button>
                <div className={`w-[101px] bg-[#dcdad5] ${bevel}`} />
                <button type="button" aria-label="Scroll right" className={`ml-auto flex w-[15px] items-center justify-center bg-[#dcdad5] ${bevel}`}>
                  <svg width="4" height="7" viewBox="0 0 4 7"><path d="M0 0v7l4-3.500z" /></svg>
                </button>
              </div>
            </div>
            <div className="flex h-[9px] shrink-0 items-center justify-center border-t border-white pl-[10px]"><Dots /></div>
            <ul className="min-h-0 grow border-t border-l border-black bg-white pt-0.5 pl-[2px] leading-[21px]">
              <li className="flex items-center gap-1"><Expander open />Layer</li>
              <li className="pl-8">base</li>
            </ul>
          </aside>

          <div className="flex w-2 shrink-0 items-center justify-center border-l border-white pt-3"><Dots vertical /></div>

          <main className="flex min-w-0 grow flex-col">
            <section className="flex min-h-0 grow flex-col border-l border-[#9c9a94]">
              <div className="flex h-[35px] shrink-0">
                <button type="button" className="h-[34px] w-[198px] border-t border-r-2 border-l border-t-white border-r-black border-l-white px-[6px] text-left">simple_regulation.xml</button>
                <div className="grow border-b border-white" />
              </div>
              <div className="ml-px flex min-h-0 grow flex-col border-t border-r-2 border-b-2 border-l-2 border-t-[#808080] border-r-[#555] border-b-black border-l-[#808080]">
                <div className="flex min-h-0 grow items-center justify-center overflow-hidden pr-px">
                  <Diagram />
                </div>
                <footer className="mb-px flex h-[17px] shrink-0 text-[11px] leading-[14px] font-normal">
                  <div className="grow border-t border-r border-b border-t-[#808080] border-r-white border-b-white pl-[6px]">document saved.</div>
                  <div className="ml-px w-[150px] border border-t-[#808080] border-r-white border-b-white border-l-[#808080] pl-[5px]">Grid Snap ON</div>
                </footer>
              </div>
            </section>

            <div className="flex h-[9px] shrink-0 items-center justify-center border-t border-white pb-px pl-3"><Dots /></div>

            <div className="flex h-[230px] shrink-0">
              <section className="flex min-w-0 grow flex-col border border-[#9c9a94] bg-white pt-0.5">
                <div className="flex h-8 shrink-0">
                  <div role="tablist" className="flex h-8 w-[953px] items-end">
                    <button type="button" role="tab" aria-selected="true" className="h-8 w-[73px] shrink-0 border-r-2 border-black bg-[#dcdad5] pb-1 leading-5">Species</button>
                    {tabs.map((t) => (
                      <button key={t} type="button" role="tab" aria-selected="false" className="h-[30px] grow border-r-2 border-black bg-[#b9b5aa] leading-5 shadow-[inset_-1px_0_0_#8c887c]">{t}</button>
                    ))}
                  </div>
                </div>
                <div className="flex min-h-0 grow flex-col border-r-2 border-b-2 border-black bg-[#dcdad5] shadow-[inset_0_1px_0_#fff]">
                  <div className="flex h-[43px] shrink-0 items-center justify-center gap-[6px] pt-0.5">
                    <button type="button" disabled className={`h-[29px] px-[7px] text-[#8c8c88] text-shadow-[1px_1px_0_#fff] ${bevel}`}>Edit</button>
                    <button type="button" className={`h-[29px] px-[7px] ${bevel}`}>Export</button>
                  </div>
                  <div className="mx-0.5 flex min-h-0 grow flex-col border-t-2 border-r-2 border-b border-l-2 border-t-[#777] border-r-white border-b-white border-l-[#777]">
                    <div className="grow overflow-hidden bg-[linear-gradient(#dcdad5_0_29px,#000_29px_30px,#fff_30px)] pl-px">
                      <SpeciesTable />
                    </div>
                  </div>
                </div>
              </section>

              <div className="flex w-2 shrink-0 items-center justify-center pt-3"><Dots vertical /></div>

              <section className="flex w-[206px] shrink-0 flex-col border border-[#9c9a94]">
                <div className="flex h-[43px] shrink-0 items-center justify-center border-t border-l border-white pt-0.5">
                  <button type="button" disabled className={`h-[29px] px-[7px] text-[#8c8c88] text-shadow-[1px_1px_0_#fff] ${bevel}`}>Edit Notes</button>
                </div>
                <textarea aria-label="Notes" className="m-px grow resize-none border-t border-l border-black bg-white outline-none" />
              </section>
            </div>
          </main>
        </div>

        <div className="flex h-[21px] shrink-0 items-end justify-end pr-[3px]">
          <div role="status" aria-label="Progress" className="h-5 w-[150px] rounded-[3px] border border-[#808080] bg-white" />
        </div>
      </div>
      <div className="flex h-[6px] shrink-0 border-t border-[#777]">
        <div className="w-5 border-t border-r border-t-white border-r-[#777] bg-[#b9b9b9]" />
        <div className="grow border-t border-white" />
        <div className="w-5 border-t border-l border-t-white border-l-[#777] bg-[#b9b9b9]" />
      </div>
    </div>
  );
}
